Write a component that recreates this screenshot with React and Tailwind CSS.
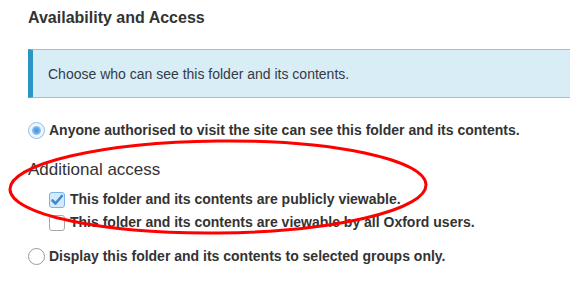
import React from "react";

const Radio = ({ checked }) =>
  checked ? (
    <span className="flex h-[17px] w-[17px] shrink-0 items-center justify-center rounded-full border border-[#8cbfe8] bg-[#eef6fd]">
      <span className="h-[9px] w-[9px] rounded-full bg-[radial-gradient(circle,#3f8fdc_0%,#6aaee8_45%,#cfe5f8_100%)]" />
    </span>
  ) : (
    <span className="h-[17px] w-[17px] shrink-0 rounded-full border border-[#9a9a9a] bg-white" />
  );

const Checkbox = ({ checked }) =>
  checked ? (
    <span className="flex h-[16px] w-[16px] shrink-0 items-center justify-center rounded-[3px] border border-[#78b4ea] bg-[#d5eafb]">
      <svg width="14" height="14" viewBox="0 0 14 14">
        <path
          d="M2.5 7.5 L5.5 10.5 L11.8 3"
          fill="none"
          stroke="#3b8ad6"
          strokeWidth="2.6"
          strokeLinecap="round"
          strokeLinejoin="round"
        />
      </svg>
    </span>
  ) : (
    <span className="h-[16px] w-[16px] shrink-0 rounded-[3px] border border-[#a8a8a8] bg-white" />
  );

export default function App() {
  return (
    <div className="relative h-[285px] w-[570px] overflow-hidden bg-white font-['Liberation_Sans',Arial,sans-serif] text-[#333]">
      <div className="pl-[28px] pt-[8px]">
        <h2 className="text-[16px] font-bold leading-[20px]">Availability and Access</h2>

        {/* Info box */}
        <div className="mt-[21px] flex h-[49px] w-[600px] items-center border-y border-l-[5px] border-y-[#88c8e6] border-l-[#2b96c4] bg-[#d9edf7] pl-[15px]">
          <p className="text-[14px] leading-[20px] text-[#333b46]">
            Choose who can see this folder and its contents.
          </p>
        </div>

        <label className="mt-[22px] flex h-[20px] items-center gap-[4px]">
          <Radio checked />
          <span className="text-[14px] font-bold">
            Anyone authorised to visit the site can see this folder and its contents.
          </span>
        </label>

        <h3 className="mt-[20px] text-[17px] leading-[20px]">Additional access</h3>

        <div className="mt-[8px] pl-[21px]">
          <label className="flex h-[23px] items-center gap-[5px]">
            <Checkbox checked />
            <span className="text-[14px] font-bold">
              This folder and its contents are publicly viewable.
            </span>
          </label>
          <label className="flex h-[23px] items-center gap-[5px]">
            <Checkbox />
            <span className="text-[14px] font-bold">
              This folder and its contents are viewable by all Oxford users.
            </span>
          </label>
        </div>

        <label className="mt-[12px] flex h-[20px] items-center gap-[4px]">
          <Radio />
          <span className="text-[14px] font-bold">
            Display this folder and its contents to selected groups only.
          </span>
        </label>
      </div>

      {/* Red annotation ellipse */}
      <svg className="pointer-events-none absolute left-0 top-0" width="570" height="285">
        <ellipse
          cx="218"
          cy="187"
          rx="208"
          ry="46"
          fill="none"
          stroke="#ff0000"
          strokeWidth="3"
          transform="rotate(-0.6 218 187)"
        />
      </svg>
    </div>
  );
}
